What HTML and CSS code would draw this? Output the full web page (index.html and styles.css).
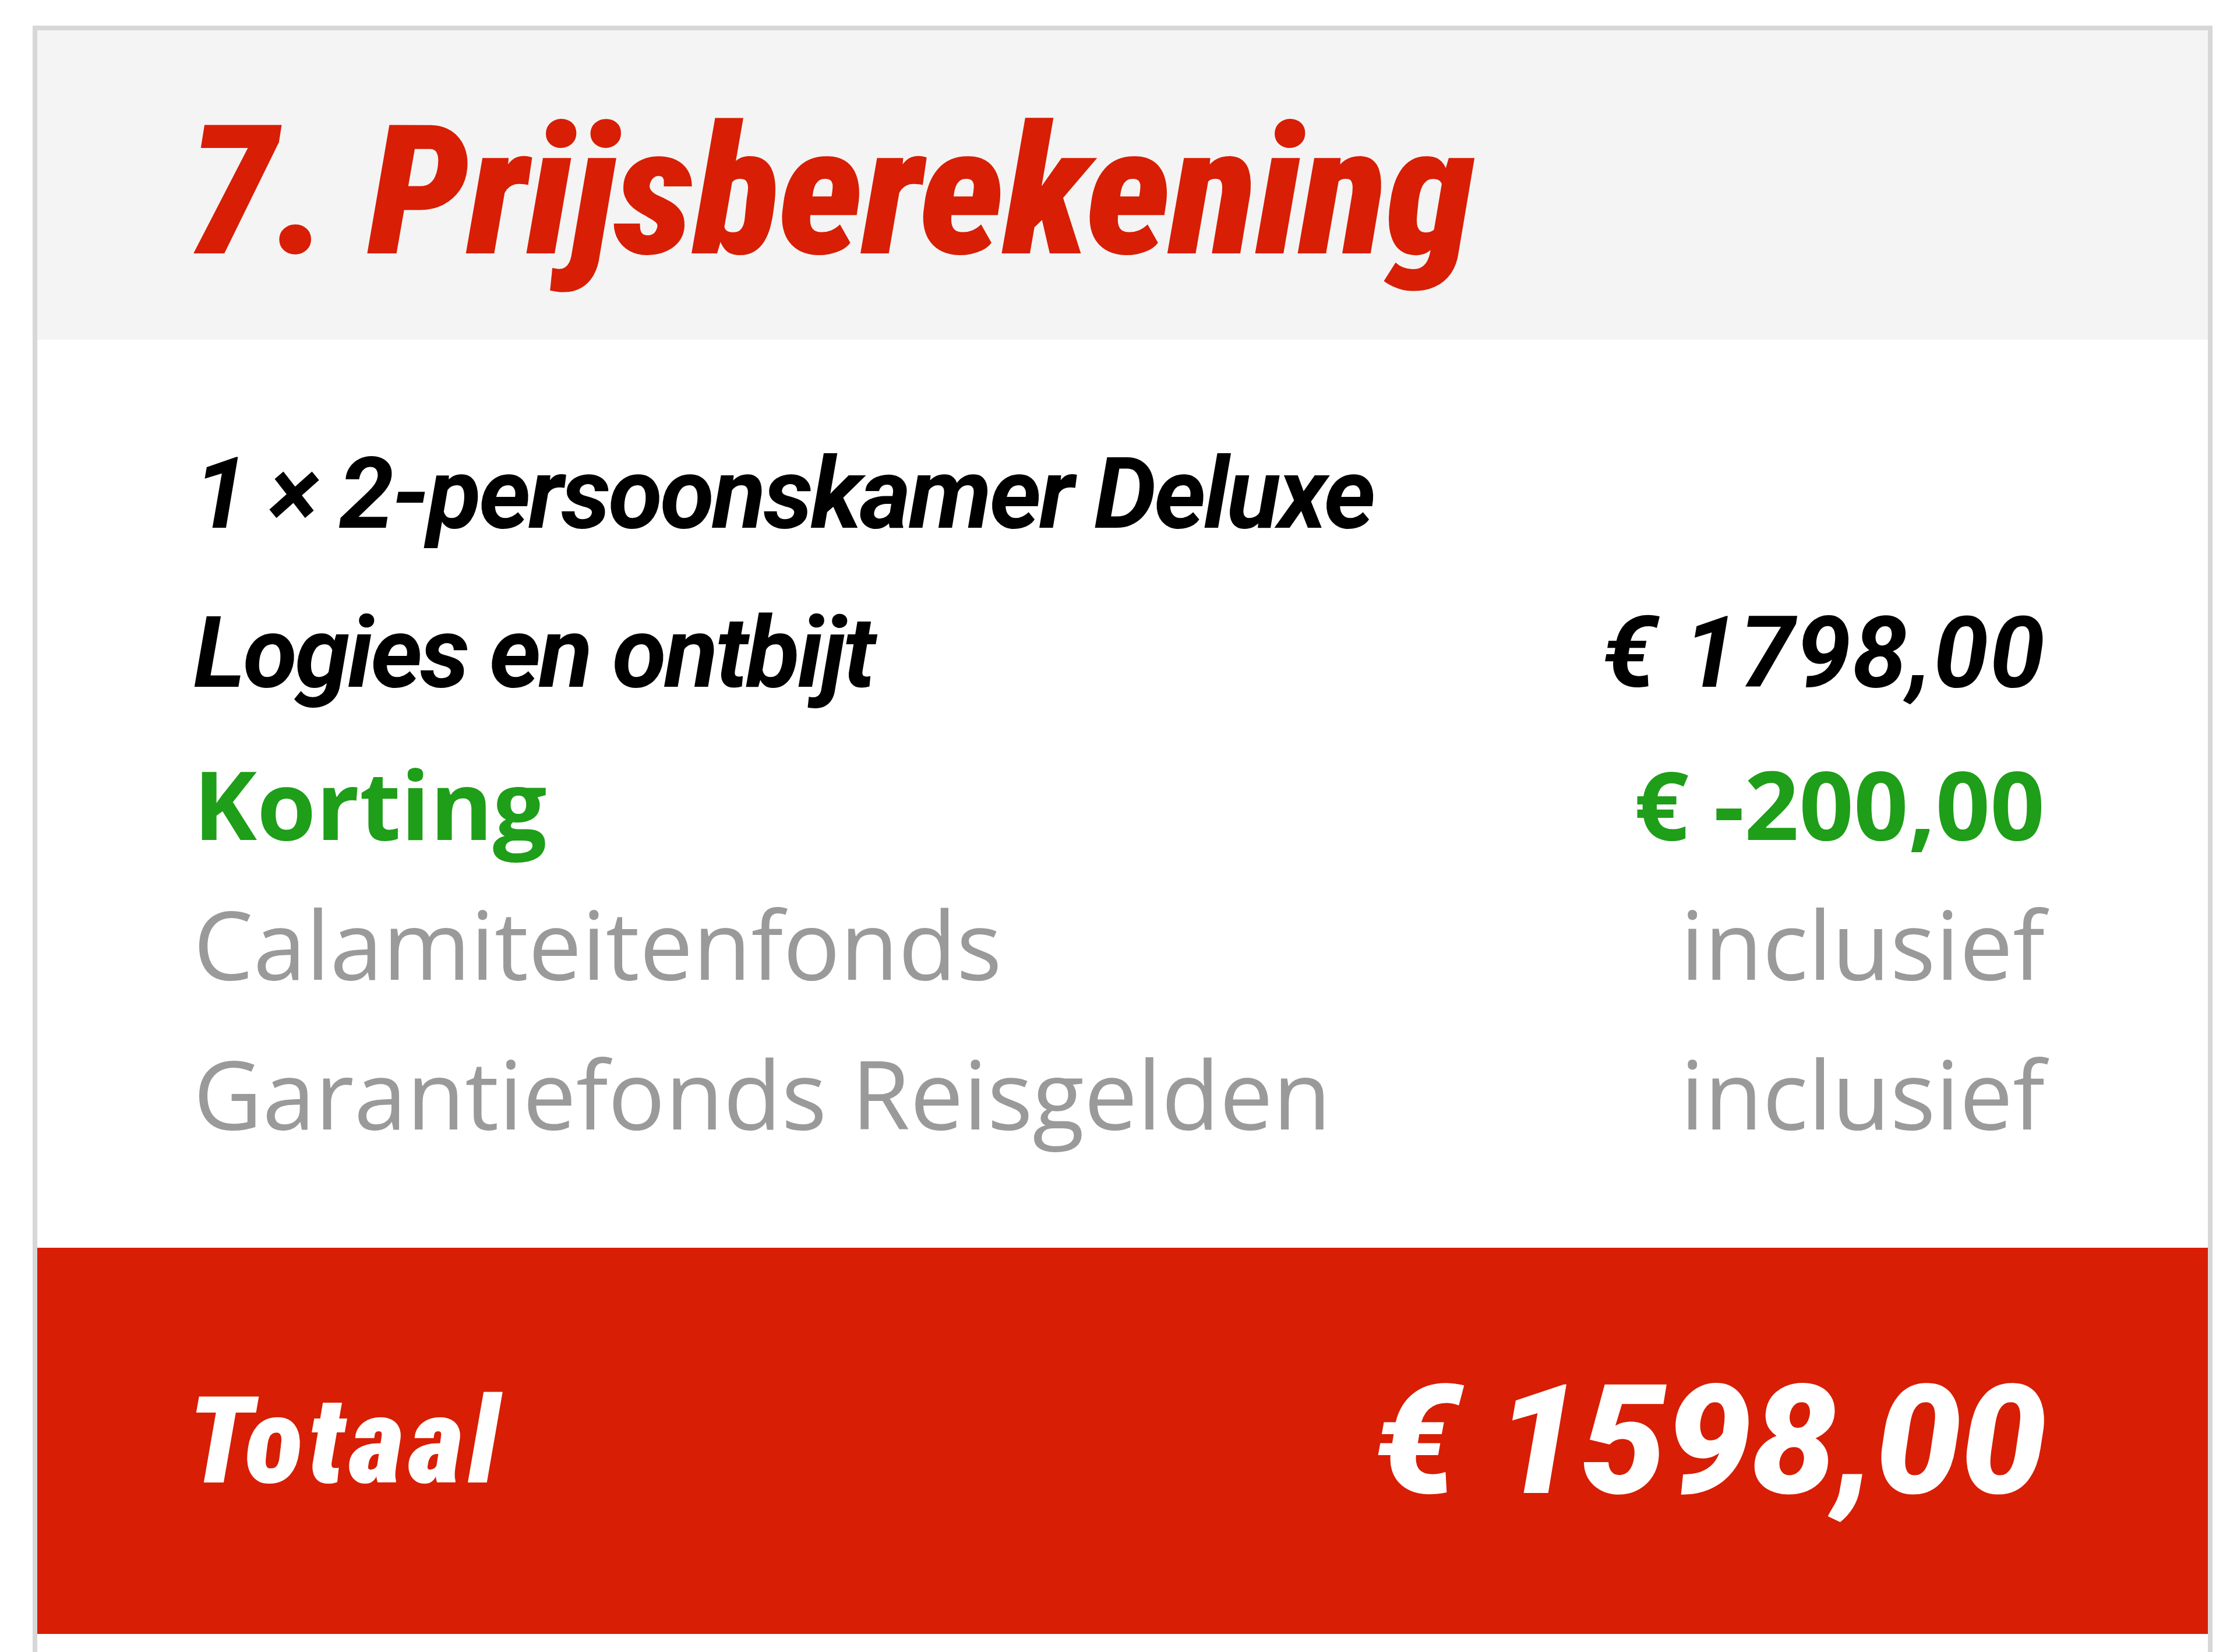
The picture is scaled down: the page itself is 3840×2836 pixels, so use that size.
FILE: index.html
```html
<!DOCTYPE html>
<html lang="nl">
<head>
<meta charset="utf-8">
<title>Prijsberekening</title>
<link rel="stylesheet" href="styles.css">
</head>
<body>
<section class="card">
  <header class="card-head">
    <h2 class="card-title">7. Prijsberekening</h2>
  </header>
  <div class="card-body">
    <div class="row row-strong row-first"><span>1 × 2-persoonskamer Deluxe</span></div>
    <div class="row row-strong"><span>Logies en ontbijt</span><span class="amount">€ 1798,00</span></div>
    <div class="row row-discount"><span>Korting</span><span>€ -200,00</span></div>
    <div class="row row-muted"><span>Calamiteitenfonds</span><span>inclusief</span></div>
    <div class="row row-muted"><span>Garantiefonds Reisgelden</span><span>inclusief</span></div>
  </div>
  <footer class="card-total">
    <span class="total-label">Totaal</span>
    <span class="total-amount">€ 1598,00</span>
  </footer>
</section>
</body>
</html>
```
FILE: styles.css
```css
html, body {
  margin: 0;
  padding: 0;
  background: #ffffff;
}

body {
  font-family: "Open Sans", "Liberation Sans", sans-serif;
}

.card {
  margin: 44px 42px 0 56px;
  border: 8px solid #d7d7d7;
  background: #ffffff;
  padding-bottom: 40px;
}

.card-head {
  background: #f4f4f4;
  padding: 96px 0 72px 258px;
}

.card-title {
  margin: 0;
  font-family: "Roboto Condensed", "Roboto", sans-serif;
  font-weight: 900;
  font-style: italic;
  font-size: 310px;
  line-height: 363px;
  color: #d81e05;
  letter-spacing: -2px;
}

.card-body {
  padding: 137px 280px 137px 268px;
}

.row {
  display: flex;
  justify-content: space-between;
  align-items: baseline;
  height: 257px;
  line-height: 257px;
  white-space: nowrap;
}

.row-first {
  height: 273px;
}

.row-strong {
  font-family: "Roboto", "Liberation Sans", sans-serif;
  font-style: italic;
  font-weight: 700;
  font-size: 170px;
  letter-spacing: -4px;
  color: #000000;
}

.row-strong .amount {
  letter-spacing: 2px;
  margin-right: -2px;
}

.row-discount {
  height: 241px;
  font-family: "Open Sans", "Liberation Sans", sans-serif;
  font-weight: 700;
  font-size: 164px;
  color: #1f9e19;
}

.row-muted {
  font-family: "Open Sans", "Liberation Sans", sans-serif;
  font-weight: 400;
  font-size: 163px;
  color: #9a9a9a;
}

.card-total {
  display: flex;
  justify-content: space-between;
  align-items: center;
  height: 663px;
  padding: 0 278px 0 258px;
  background: #d81e05;
  color: #ffffff;
  font-style: italic;
  white-space: nowrap;
}

.total-label {
  font-family: "Roboto Condensed", "Roboto", sans-serif;
  font-weight: 900;
  font-size: 208px;
  letter-spacing: 8px;
}

.total-amount {
  font-family: "Roboto", "Liberation Sans", sans-serif;
  font-weight: 900;
  font-size: 262px;
  letter-spacing: -1px;
}
```
